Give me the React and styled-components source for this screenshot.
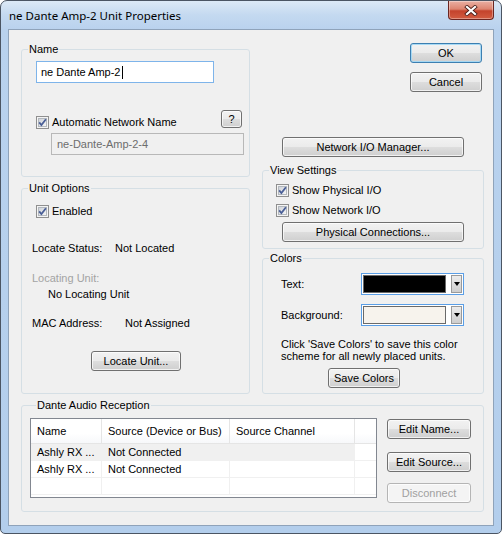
import React from 'react';
import styled, { createGlobalStyle } from 'styled-components';

const GlobalStyle = createGlobalStyle`
  html, body {
    margin: 0;
    padding: 0;
    background: #ffffff;
  }
  body {
    font-family: "Liberation Sans", Arial, sans-serif;
    font-size: 11px;
    color: #000;
  }
`;

const Window = styled.div`
  box-sizing: border-box;
  width: 502px;
  height: 534px;
  display: flex;
  flex-direction: column;
  padding: 0 7px 7px;
  border: 1px solid #4b5563;
  border-radius: 7px 7px 5px 5px;
  background: linear-gradient(180deg, #dce9f6 0px, #c4d9f0 14px, #b9d2ee 29px, #b3ceec 100%);
  overflow: hidden;
`;

const TitleBar = styled.div`
  height: 28px;
  flex-shrink: 0;
  display: flex;
  align-items: flex-start;
`;

const Title = styled.span`
  font-family: "Noto Sans", "Open Sans", sans-serif;
  font-size: 11.5px;
  line-height: 29px;
  padding-left: 1px;
`;

const CloseButton = styled.div`
  margin-left: auto;
  box-sizing: border-box;
  width: 46px;
  height: 19px;
  border: 1px solid #6b2621;
  border-top: none;
  border-radius: 0 0 4px 4px;
  background: linear-gradient(180deg, #eab0a3 0%, #dd8470 45%, #c4432c 55%, #d25c41 100%);
  box-shadow: inset 0 0 0 1px rgba(255, 255, 255, 0.35);
  display: flex;
  align-items: center;
  justify-content: center;
`;

const Client = styled.div`
  flex: 1;
  display: flex;
  flex-direction: column;
  box-sizing: border-box;
  background: #f0f0f0;
  border: 1px solid #8fa3ba;
  padding: 13px 9px 13px 12px;
`;

const TopArea = styled.div`
  display: grid;
  grid-template-columns: 229px 222px;
  column-gap: 12px;
`;

const Column = styled.div`
  display: flex;
  flex-direction: column;
`;

const Group = styled.fieldset`
  box-sizing: border-box;
  min-width: 0;
  margin: ${(p) => p.$mt || 0}px 0 0;
  padding: 0 0 ${(p) => p.$pb || 0}px ${(p) => p.$pl || 0}px;
  border: 1px solid #d5dfe5;
  border-radius: 3px;
  flex: ${(p) => (p.$grow ? 1 : 'none')};
  display: flex;
  flex-direction: column;
  align-items: flex-start;
`;

const Legend = styled.legend`
  margin-left: 6px;
  padding: 0 1px;
  font-size: 11px;
  line-height: 13px;
`;

const Button = styled.button`
  box-sizing: border-box;
  flex-shrink: 0;
  width: ${(p) => p.$w}px;
  height: ${(p) => p.$h || 20}px;
  margin: ${(p) => p.$m || 0};
  align-self: ${(p) => (p.$right ? 'flex-end' : 'flex-start')};
  padding: 0;
  font-family: "Liberation Sans", Arial, sans-serif;
  font-size: 11px;
  color: ${(p) => (p.disabled ? '#a0a0a0' : '#000')};
  border: 1px solid ${(p) => (p.$default ? '#3c7fb1' : p.disabled ? '#b5b5b5' : '#707070')};
  border-radius: 3px;
  background: ${(p) =>
    p.disabled
      ? '#f4f4f4'
      : 'linear-gradient(180deg, #f2f2f2 0%, #ebebeb 48%, #dddddd 52%, #cfcfcf 100%)'};
  box-shadow: inset 0 0 0 1px
    ${(p) => (p.$default ? 'rgba(160, 215, 245, 0.9)' : 'rgba(255, 255, 255, 0.7)')};
`;

const TextBox = styled.div`
  box-sizing: border-box;
  width: ${(p) => p.$w}px;
  height: 22px;
  margin: ${(p) => p.$m};
  padding-left: ${(p) => p.$pl}px;
  display: flex;
  align-items: center;
  white-space: nowrap;
  background: ${(p) => (p.$disabled ? '#f0f0f0' : '#ffffff')};
  border: 1px solid ${(p) => (p.$disabled ? '#b8b8b8' : '#7eb4ea')};
  color: ${(p) => (p.$disabled ? '#6d6d6d' : '#000')};
`;

const Caret = styled.span`
  display: inline-block;
  width: 1px;
  height: 13px;
  margin-left: 1px;
  background: #000;
`;

const Row = styled.div`
  align-self: stretch;
  display: flex;
  align-items: flex-start;
  margin-top: ${(p) => p.$mt || 0}px;
  padding: 0 ${(p) => p.$pr || 0}px 0 ${(p) => p.$pl || 0}px;
`;

const CheckLabel = styled.div`
  display: flex;
  align-items: center;
  gap: 3px;
  line-height: 13px;
  margin: ${(p) => p.$m || 0};
  white-space: nowrap;
`;

const Text = styled.div`
  line-height: ${(p) => p.$lh || 13}px;
  margin: ${(p) => p.$m || 0};
  color: ${(p) => (p.$muted ? '#a3a3a3' : '#000')};
  white-space: nowrap;
`;

const InfoRow = styled.div`
  display: flex;
  line-height: 13px;
  margin: ${(p) => p.$m};
  white-space: nowrap;
`;

const InfoLabel = styled.span`
  width: ${(p) => p.$w}px;
`;

const ColorRow = styled.div`
  display: flex;
  align-items: center;
  margin-top: ${(p) => p.$mt}px;
  padding-left: 18px;
`;

const ColorLabel = styled.span`
  width: 80px;
`;

const Combo = styled.div`
  box-sizing: border-box;
  width: 103px;
  height: 22px;
  padding: 1px;
  display: flex;
  gap: 5px;
  background: #ffffff;
  border: 1px solid #5a9ee6;
`;

const Swatch = styled.div`
  flex: 1;
  border: 1px solid #6a6a6a;
  background: ${(p) => p.$color};
`;

const DropButton = styled.div`
  box-sizing: border-box;
  width: 11px;
  border: 1px solid #9a9a9a;
  background: linear-gradient(180deg, #ececec, #cdcdcd);
  display: flex;
  align-items: center;
  justify-content: center;
`;

const Arrow = styled.span`
  width: 0;
  height: 0;
  border-left: 3px solid transparent;
  border-right: 3px solid transparent;
  border-top: 4px solid #000;
`;

const ListView = styled.div`
  box-sizing: border-box;
  width: 347px;
  height: 80px;
  flex-shrink: 0;
  border: 1px solid #828790;
  background: #ffffff;
  display: grid;
  grid-template-columns: 71px 128px 125px 1fr;
  grid-template-rows: 25px;
  grid-auto-rows: 17px;
  align-content: start;
  overflow: hidden;
`;

const HeaderCell = styled.div`
  box-sizing: border-box;
  display: flex;
  align-items: center;
  padding-left: 6px;
  white-space: nowrap;
  background: linear-gradient(180deg, #ffffff 0%, #ffffff 60%, #f7f8fa 100%);
  border-bottom: 1px solid #e5e5e5;
  border-right: ${(p) => (p.$last ? 'none' : '1px solid #e5e5e5')};
`;

const Cell = styled.div`
  box-sizing: border-box;
  display: flex;
  align-items: center;
  padding-left: 6px;
  white-space: nowrap;
  overflow: hidden;
  background: ${(p) => (p.$shade ? '#f0f0f0' : '#ffffff')};
  border-bottom: 1px solid #f0f0f0;
  border-right: ${(p) => (p.$last ? 'none' : '1px solid #f0f0f0')};
`;

const SideButtons = styled.div`
  display: flex;
  flex-direction: column;
  margin-left: 10px;
`;

const CheckIcon = () => (
  <svg width="13" height="13" viewBox="0 0 13 13">
    <defs>
      <linearGradient id="cbfill" x1="0" y1="0" x2="1" y2="1">
        <stop offset="0" stopColor="#cdd1d7" />
        <stop offset="1" stopColor="#f7f7f7" />
      </linearGradient>
    </defs>
    <rect x="0.5" y="0.5" width="12" height="12" fill="#f4f4f4" stroke="#8f8f8f" />
    <rect x="2.5" y="2.5" width="8" height="8" fill="url(#cbfill)" stroke="#b3b8be" />
    <path d="M3.2 6.4 L5.4 9 L9.9 3.3" fill="none" stroke="#4a5f97" strokeWidth="1.8" />
  </svg>
);

const Checkbox = ({ label, m }) => (
  <CheckLabel $m={m}>
    <CheckIcon />
    <span>{label}</span>
  </CheckLabel>
);

const CloseGlyph = () => (
  <svg width="14" height="11" viewBox="0 0 14 11">
    <path d="M3 2 L11 9 M11 2 L3 9" stroke="#4a1d18" strokeWidth="3.8" strokeLinecap="square" />
    <path d="M3 2 L11 9 M11 2 L3 9" stroke="#ffffff" strokeWidth="2.2" strokeLinecap="square" />
  </svg>
);

const ColorPicker = ({ color }) => (
  <Combo>
    <Swatch $color={color} />
    <DropButton>
      <Arrow />
    </DropButton>
  </Combo>
);

const rows = [
  { name: 'Ashly RX ...', source: 'Not Connected', channel: '', shade: true },
  { name: 'Ashly RX ...', source: 'Not Connected', channel: '' },
  { name: '', source: '', channel: '' },
];

export default function App() {
  return (
    <>
      <GlobalStyle />
      <Window>
        <TitleBar>
          <Title>ne Dante Amp-2 Unit Properties</Title>
          <CloseButton>
            <CloseGlyph />
          </CloseButton>
        </TitleBar>
        <Client>
          <TopArea>
            <Column>
              <Group $pb={21}>
                <Legend>Name</Legend>
                <TextBox $w={178} $pl={4} $m="5px 0 0 14px">
                  ne Dante Amp-2
                  <Caret />
                </TextBox>
                <Row $mt={27} $pl={14} $pr={7}>
                  <Checkbox label="Automatic Network Name" m="6px 0 0 0" />
                  <Button $w={21} $h={18} $m="0 0 0 auto">?</Button>
                </Row>
                <TextBox $w={193} $pl={5} $m="4px 0 0 29px" $disabled>
                  ne-Dante-Amp-2-4
                </TextBox>
              </Group>
              <Group $mt={5} $pb={22}>
                <Legend>Unit Options</Legend>
                <Checkbox label="Enabled" m="10px 0 0 14px" />
                <InfoRow $m="24px 0 0 10px">
                  <InfoLabel $w={83}>Locate Status:</InfoLabel>
                  <span>Not Located</span>
                </InfoRow>
                <Text $m="17px 0 0 10px" $muted>
                  Locating Unit:
                </Text>
                <Text $m="3px 0 0 26px">No Locating Unit</Text>
                <InfoRow $m="16px 0 0 10px">
                  <InfoLabel $w={93}>MAC Address:</InfoLabel>
                  <span>Not Assigned</span>
                </InfoRow>
                <Button $w={90} $m="21px 0 0 69px">Locate Unit...</Button>
              </Group>
            </Column>
            <Column>
              <Button $w={72} $m="0 2px 0 0" $right $default>
                OK
              </Button>
              <Button $w={72} $m="9px 2px 0 0" $right>
                Cancel
              </Button>
              <Button $w={182} $m="45px 0 0 20px">Network I/O Manager...</Button>
              <Group $mt={7} $pb={6}>
                <Legend>View Settings</Legend>
                <Checkbox label="Show Physical I/O" m="7px 0 0 13px" />
                <Checkbox label="Show Network I/O" m="7px 0 0 13px" />
                <Button $w={182} $m="5px 0 0 19px">Physical Connections...</Button>
              </Group>
              <Group $mt={3} $pb={4} $grow>
                <Legend>Colors</Legend>
                <ColorRow $mt={8}>
                  <ColorLabel>Text:</ColorLabel>
                  <ColorPicker color="#000000" />
                </ColorRow>
                <ColorRow $mt={9}>
                  <ColorLabel>Background:</ColorLabel>
                  <ColorPicker color="#f7f3ed" />
                </ColorRow>
                <Text $lh={12} $m="12px 0 0 18px">
                  Click 'Save Colors' to save this color
                  <br />
                  scheme for all newly placed units.
                </Text>
                <Button $w={72} $m="6px 0 0 65px">Save Colors</Button>
              </Group>
            </Column>
          </TopArea>
          <Group $mt={5} $pb={8} $pl={8}>
            <Legend>Dante Audio Reception</Legend>
            <Row $mt={6}>
              <ListView>
                <HeaderCell>Name</HeaderCell>
                <HeaderCell>Source (Device or Bus)</HeaderCell>
                <HeaderCell>Source Channel</HeaderCell>
                <HeaderCell $last />
                {rows.map((r, i) => (
                  <React.Fragment key={i}>
                    <Cell $shade={r.shade}>{r.name}</Cell>
                    <Cell $shade={r.shade}>{r.source}</Cell>
                    <Cell $shade={r.shade}>{r.channel}</Cell>
                    <Cell $last />
                  </React.Fragment>
                ))}
              </ListView>
              <SideButtons>
                <Button $w={84} $m="1px 0 0 0">Edit Name...</Button>
                <Button $w={84} $m="13px 0 0 0">Edit Source...</Button>
                <Button $w={84} $m="11px 0 0 0" disabled>
                  Disconnect
                </Button>
              </SideButtons>
            </Row>
          </Group>
        </Client>
      </Window>
    </>
  );
}
